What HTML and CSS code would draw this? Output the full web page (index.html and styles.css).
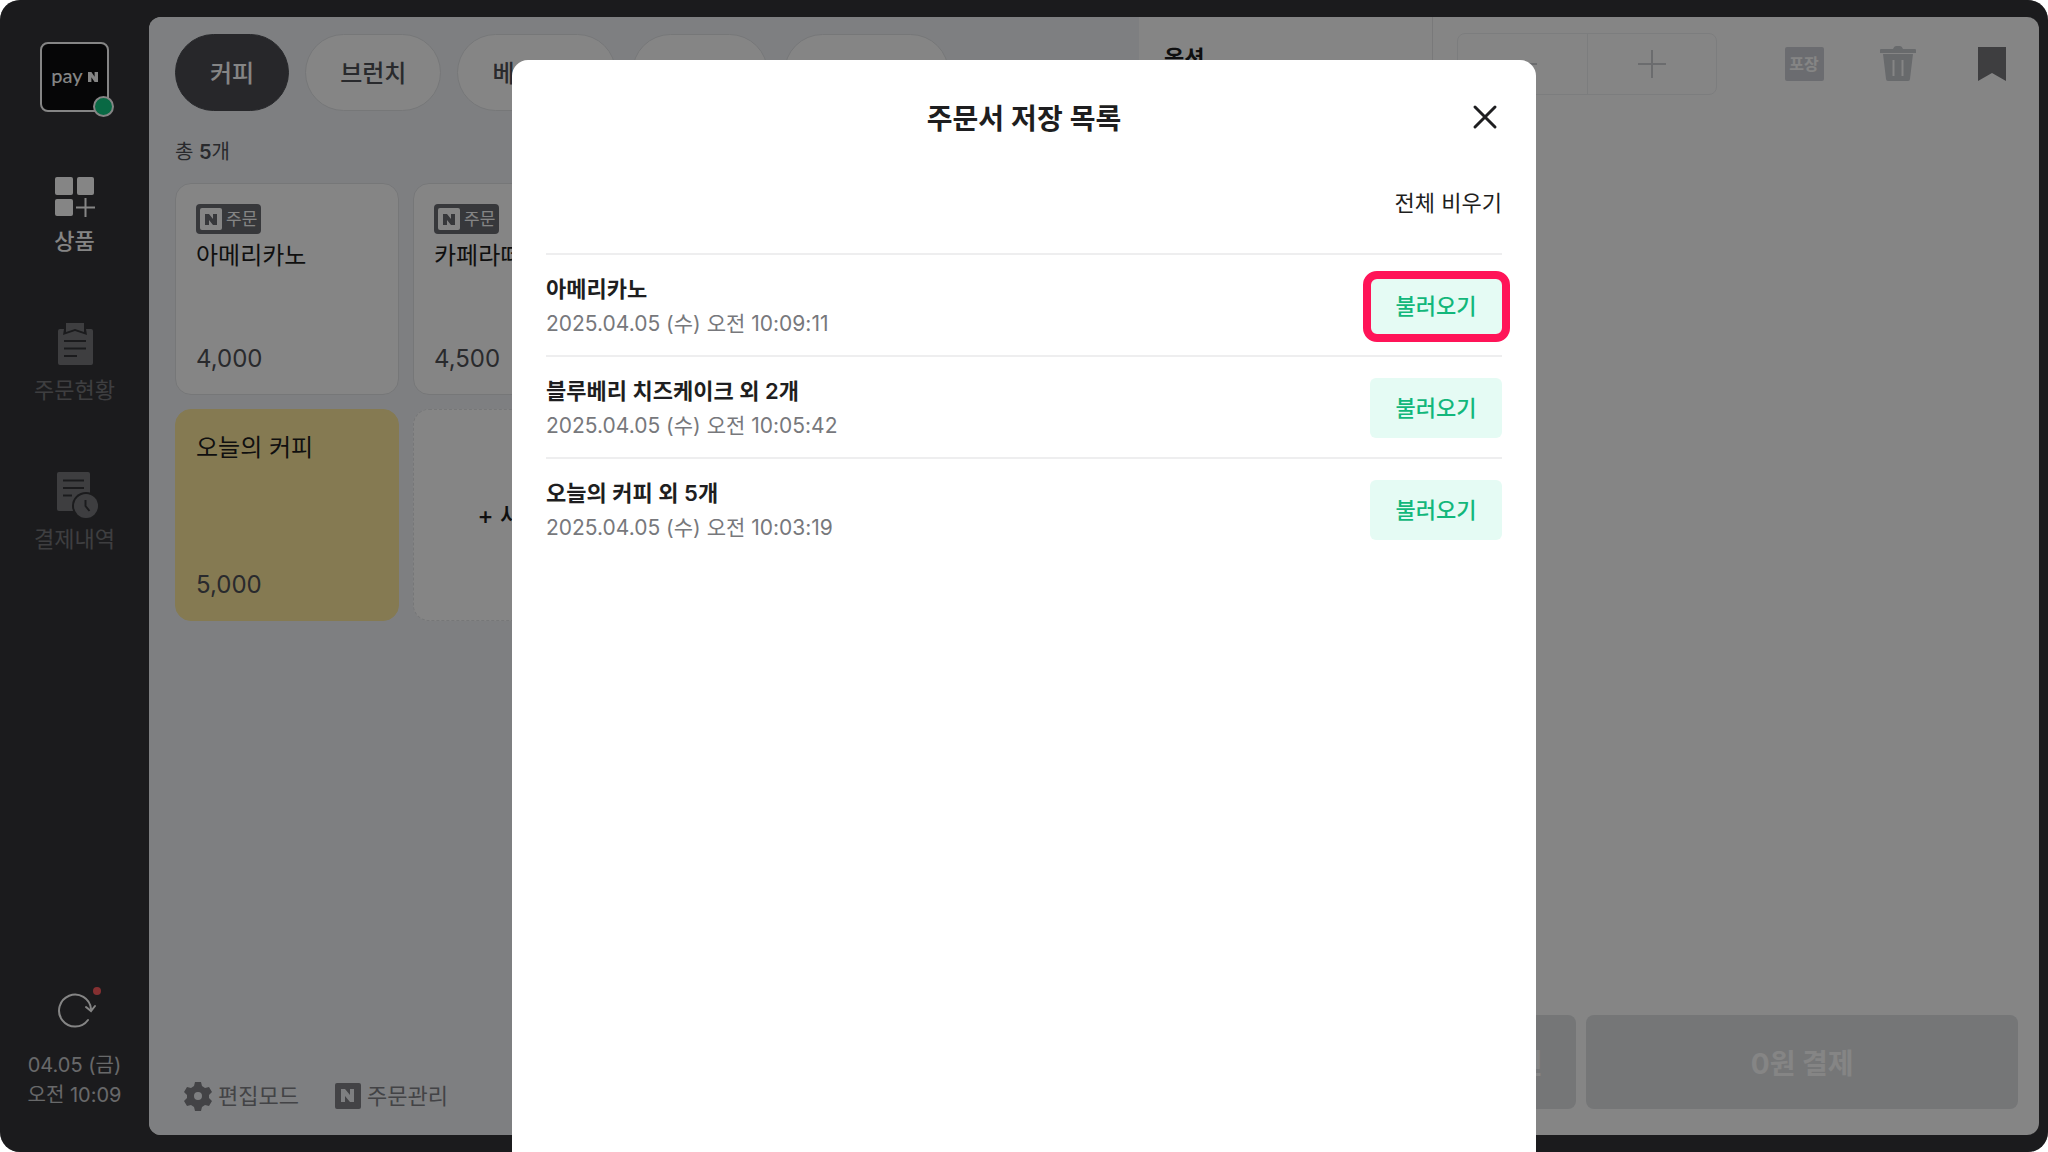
FILE: index.html
```html
<!DOCTYPE html>
<html lang="ko">

<head>
    <meta charset="UTF-8">
    <meta name="viewport" content="width=device-width, initial-scale=1.0">
    <title>주문서 저장 목록</title>
    <link rel="stylesheet" href="styles.css">
</head>

<body>
    <div class="app">
        <!-- Left menu -->
        <nav class="sidebar">
            <a href="#" class="logo">
                <span class="logo-pay">pay</span><svg class="logo-n" viewBox="0 0 10 10"><path d="M0 0h3.4l3.2 4.7V0H10v10H6.6L3.4 5.3V10H0z" fill="currentColor"/></svg>
                <span class="logo-dot"></span>
            </a>

            <div class="menu">
                <a href="#" class="menu-item active">
                    <svg width="44" height="44" viewBox="0 0 44 44">
                        <g fill="currentColor">
                            <rect x="2" y="2" width="18" height="18" rx="2"/>
                            <rect x="24" y="2" width="17" height="18" rx="2"/>
                            <rect x="2" y="24" width="18" height="17" rx="2"/>
                        </g>
                        <path d="M32.5 23v19M23 32.5h19" stroke="currentColor" stroke-width="2"/>
                    </svg>
                    상품
                </a>
                <a href="#" class="menu-item">
                    <svg width="44" height="44" viewBox="0 2 44 44">
                        <path d="M6 7h5l-1 6 12-4 12 4-1-6h5q2 0 2 2v32q0 2-2 2H7q-2 0-2-2V9q0-2 2-2z" fill="currentColor"/>
                        <path d="M13 1h18v9l-9-3-9 3z" fill="currentColor"/>
                        <path d="M11 19h22M11 26.5h22M11 34h13" class="cut"/>
                    </svg>
                    주문현황
                </a>
                <a href="#" class="menu-item">
                    <svg width="44" height="44" viewBox="0 3 44 44">
                        <rect x="4" y="2" width="33" height="39" rx="2" fill="currentColor"/>
                        <path d="M10 10.5h21M10 18h21M10 25.5h9" class="cut"/>
                        <circle cx="33" cy="36" r="14" class="cut-fill"/>
                        <circle cx="33" cy="36" r="12" fill="currentColor"/>
                        <path d="M32.5 30v6l4 5" class="cut"/>
                    </svg>
                    결제내역
                </a>
            </div>

            <div class="status">
                <button class="refresh" aria-label="새로고침">
                    <svg width="44" height="44" viewBox="0 0 44 44">
                        <path d="M35 32a16 16 0 1 1 3-11" class="line"/>
                        <path d="M33 19l5 4 4-5" class="line"/>
                        <circle cx="44" cy="3" r="4" class="alert"/>
                    </svg>
                </button>
                <p>04.05 (금)<br>오전 10:09</p>
            </div>
        </nav>

        <main class="panel">
            <!-- Product list -->
            <section class="products">
                <div class="tabs">
                    <button class="tab selected">커피</button>
                    <button class="tab">브런치</button>
                    <button class="tab">베이커리</button>
                    <button class="tab">디저트</button>
                    <button class="tab">시즌 메뉴</button>
                </div>
                <p class="count">총 <b>5</b>개</p>
                <div class="grid">
                    <button class="card">
                        <span class="badge"><svg width="22" height="22" viewBox="0 0 22 22"><rect width="22" height="22" rx="2" fill="#fff"/><path d="M5 6h4l4 5V6h4v11h-4l-4-5v5H5z" fill="#6a6b72"/></svg>주문</span>
                        <span class="name">아메리카노</span>
                        <span class="price">4,000</span>
                    </button>
                    <button class="card">
                        <span class="badge"><svg width="22" height="22" viewBox="0 0 22 22"><rect width="22" height="22" rx="2" fill="#fff"/><path d="M5 6h4l4 5V6h4v11h-4l-4-5v5H5z" fill="#6a6b72"/></svg>주문</span>
                        <span class="name">카페라떼</span>
                        <span class="price">4,500</span>
                    </button>
                    <button class="card">
                        <span class="name">카푸치노</span>
                        <span class="price">4,500</span>
                    </button>
                    <button class="card">
                        <span class="name">바닐라라떼</span>
                        <span class="price">5,000</span>
                    </button>
                    <button class="card yellow">
                        <span class="name">오늘의 커피</span>
                        <span class="price">5,000</span>
                    </button>
                    <button class="card add">+ 새 상품</button>
                </div>
                <div class="tools">
                    <button class="tool">
                        <svg width="28" height="30" viewBox="0 0 28 30">
                            <path fill-rule="evenodd" fill="currentColor" d="M11 1h6l1 4 3 2 4-1 3 5-3 3v3l3 3-3 5-4-1-3 2-1 4h-6l-1-4-3-2-4 1-3-5 3-3v-3l-3-3 3-5 4 1 3-2zM14 11a4 4 0 1 0 0 8 4 4 0 0 0 0-8z"/>
                        </svg>
                        편집모드
                    </button>
                    <button class="tool">
                        <svg width="26" height="26" viewBox="0 0 26 26">
                            <path fill-rule="evenodd" fill="currentColor" d="M2 0h22q2 0 2 2v22q0 2-2 2H2q-2 0-2-2V2q0-2 2-2zM6 6v13h4v-6l5 6h4V6h-4v6l-5-6z"/>
                        </svg>
                        주문관리
                    </button>
                </div>
            </section>

            <section class="options">
                <h2>옵션</h2>
            </section>

            <!-- Order sheet -->
            <section class="order">
                <div class="order-head">
                    <div class="stepper">
                        <button aria-label="빼기"><svg width="28" height="28" viewBox="0 0 28 28"><path d="M0 14h28"/></svg></button>
                        <button aria-label="더하기"><svg width="28" height="28" viewBox="0 0 28 28"><path d="M0 14h28M14 0v28"/></svg></button>
                    </div>
                    <div class="actions">
                        <button class="action"><span class="pack">포장</span></button>
                        <button class="action trash" aria-label="삭제">
                            <svg width="38" height="38" viewBox="0 0 38 38">
                                <path d="M1 5q0-1 1-1h12q1-3 3-3h4q2 0 3 3h12q1 0 1 1v3H1z" fill="currentColor"/>
                                <path d="M4 9h30l-3 25q0 2-2 2H9q-2 0-2-2z" fill="currentColor"/>
                                <path d="M14.5 15v16M23.5 15v16" stroke="#fff" stroke-width="2"/>
                            </svg>
                        </button>
                        <button class="action saved" aria-label="저장 목록">
                            <svg width="28" height="34" viewBox="0 0 28 34"><path d="M0 0h28v34l-14-8-14 8z" fill="currentColor"/></svg>
                        </button>
                    </div>
                </div>
                <div class="pay">
                    <button class="pay-btn">할인</button>
                    <button class="pay-btn">0원 결제</button>
                </div>
            </section>
        </main>
    </div>

    <!-- Saved orders -->
    <div class="overlay">
        <div class="modal" role="dialog" aria-labelledby="modalTitle">
            <header class="modal-head">
                <h1 id="modalTitle">주문서 저장 목록</h1>
                <button class="close" aria-label="닫기">
                    <svg width="24" height="24" viewBox="0 0 24 24"><path d="M2 2l20 20M22 2L2 22"/></svg>
                </button>
            </header>
            <button class="clear">전체 비우기</button>
            <ul class="list">
                <li>
                    <div>
                        <h3>아메리카노</h3>
                        <p>2025.04.05 (수) 오전 10:09:11</p>
                    </div>
                    <button class="load highlight">불러오기</button>
                </li>
                <li>
                    <div>
                        <h3>블루베리 치즈케이크 외 2개</h3>
                        <p>2025.04.05 (수) 오전 10:05:42</p>
                    </div>
                    <button class="load">불러오기</button>
                </li>
                <li>
                    <div>
                        <h3>오늘의 커피 외 5개</h3>
                        <p>2025.04.05 (수) 오전 10:03:19</p>
                    </div>
                    <button class="load">불러오기</button>
                </li>
            </ul>
        </div>
    </div>
</body>

</html>
```

FILE: styles.css
```css
* {
    box-sizing: border-box;
}

body {
    font-family: Inter, "Noto Sans CJK KR", sans-serif;
    margin: 0;
    background-color: #fff;
    color: #1e1e20;
    overflow: hidden;
}

h1,
h2,
h3,
p,
ul {
    margin: 0;
    padding: 0;
}

a {
    color: inherit;
    text-decoration: none;
}

button {
    font: inherit;
    color: inherit;
    background: none;
    border: none;
    padding: 0;
    cursor: pointer;
}

svg {
    display: block;
    overflow: visible;
}

.app {
    display: flex;
    height: 100vh;
    padding: 17px 9px 17px 0;
    background-color: #353538;
    border-radius: 20px;
}

/* Left menu */
.sidebar {
    display: flex;
    flex-direction: column;
    align-items: center;
    width: 149px;
    padding: 25px 0;
    color: #fff;
}

.logo {
    position: relative;
    display: flex;
    align-items: center;
    justify-content: center;
    gap: 5px;
    width: 69px;
    height: 70px;
    background-color: #0c0c0e;
    border: 2px solid #fff;
    border-radius: 8px;
}

.logo-pay {
    padding-bottom: 4px;
    font-family: Lato, sans-serif;
    font-size: 20px;
    font-weight: 500;
    line-height: 24px;
}

.logo-n {
    width: 10px;
    height: 10px;
}

.logo-dot {
    position: absolute;
    right: -7px;
    bottom: -7px;
    width: 21px;
    height: 21px;
    background-color: #12c982;
    border: 2px solid #fff;
    border-radius: 50%;
}

.menu {
    display: flex;
    flex-direction: column;
    gap: 52px;
    margin-top: 63px;
}

.menu-item {
    display: flex;
    flex-direction: column;
    align-items: center;
    gap: 6px;
    height: 97px;
    font-size: 22px;
    line-height: 32px;
    color: #77787c;
}

.menu-item.active {
    color: #fff;
    font-weight: 500;
}

.cut {
    fill: none;
    stroke: #353538;
    stroke-width: 2;
}

.cut-fill {
    fill: #353538;
}

.status {
    display: flex;
    flex-direction: column;
    align-items: center;
    gap: 18px;
    margin-top: auto;
    font-size: 20px;
    line-height: 30px;
    color: #c8c9cc;
    text-align: center;
}

.line {
    fill: none;
    stroke: #fff;
    stroke-width: 2;
    stroke-linecap: round;
}

.alert {
    fill: #ff5c5f;
}

/* Main panel */
.panel {
    display: flex;
    flex: 1;
    background-color: #fff;
    border-radius: 12px;
    overflow: hidden;
}

.products {
    display: flex;
    flex-direction: column;
    flex: 1;
    padding: 17px 26px 21px;
    background-color: #f2f4f7;
}

.tabs {
    display: flex;
    gap: 16px;
}

.tab {
    height: 77px;
    padding: 0 34px 2px;
    font-size: 24px;
    font-weight: 500;
    color: #505156;
    background-color: #fff;
    border: 1px solid #e2e4e7;
    border-radius: 39px;
    white-space: nowrap;
}

.tab.selected {
    color: #fff;
    background-color: #4b4c52;
    border-color: #4b4c52;
}

.count {
    margin: 25px 0 15px;
    font-size: 20px;
    line-height: 32px;
    color: #505156;
}

.count b {
    font-weight: 600;
}

.grid {
    display: grid;
    grid-template-columns: repeat(4, 224px);
    grid-auto-rows: 212px;
    gap: 14px;
}

.card {
    display: flex;
    flex-direction: column;
    align-items: flex-start;
    padding: 20px 20px 19px;
    font-size: 24px;
    background-color: #fff;
    border: 1px solid #e2e4e7;
    border-radius: 16px;
}

.badge {
    display: flex;
    align-items: center;
    gap: 4px;
    height: 30px;
    padding: 0 4px;
    font-size: 17px;
    line-height: 22px;
    color: #fff;
    background-color: #6a6b72;
    border-radius: 4px;
}

.name {
    line-height: 36px;
}

.badge + .name {
    margin-top: 4px;
}

.price {
    margin-top: auto;
    line-height: 32px;
    color: #505156;
}

.yellow {
    background-color: #ffea9e;
    border-color: #ffea9e;
}

.add {
    align-items: center;
    justify-content: center;
    padding-bottom: 24px;
    font-weight: 500;
    border-style: dashed;
}

.tools {
    display: flex;
    gap: 36px;
    margin-top: auto;
    padding-left: 9px;
}

.tool {
    display: flex;
    align-items: center;
    gap: 6px;
    font-size: 22px;
    line-height: 36px;
    color: #808186;
}

.options {
    width: 295px;
    padding: 23px 25px;
    border-right: 1px solid #e8e8ea;
}

.options h2 {
    font-size: 22px;
    font-weight: 600;
    line-height: 36px;
}

/* Order sheet */
.order {
    display: flex;
    flex-direction: column;
    justify-content: space-between;
    width: 607px;
    padding: 16px 21px 26px 24px;
}

.order-head {
    display: flex;
    justify-content: space-between;
    padding-right: 4px;
}

.stepper {
    display: flex;
    width: 260px;
    height: 62px;
    border: 1px solid #eeeff1;
    border-radius: 8px;
}

.stepper button {
    display: flex;
    flex: 1;
    align-items: center;
    justify-content: center;
}

.stepper button + button {
    border-left: 1px solid #eeeff1;
}

.stepper path {
    stroke: #ced0d4;
    stroke-width: 2;
}

.actions {
    display: flex;
    align-items: center;
    gap: 50px;
}

.action {
    display: flex;
    align-items: center;
    justify-content: center;
    width: 44px;
    height: 44px;
}

.pack {
    width: 39px;
    font-size: 16px;
    font-weight: 700;
    line-height: 34px;
    color: #fff;
    background-color: #ced0d6;
    border-radius: 2px;
}

.trash {
    color: #c8cbd0;
}

.saved {
    color: #77787c;
}

.pay {
    display: grid;
    grid-template-columns: 119px 1fr;
    gap: 10px;
}

.pay-btn {
    height: 94px;
    font-size: 28px;
    font-weight: 700;
    color: #fff;
    background-color: #e0e2e4;
    border-radius: 8px;
}

/* Saved orders */
.overlay {
    position: fixed;
    inset: 0;
    display: flex;
    justify-content: center;
    padding-top: 60px;
    background-color: rgba(0, 0, 0, 0.48);
    border-radius: 20px;
}

.modal {
    width: 50%;
    padding: 34px;
    background-color: #fff;
    border-radius: 16px 16px 0 0;
}

.modal-head {
    display: grid;
    grid-template-columns: 1fr auto 1fr;
    align-items: center;
    height: 46px;
}

.modal-head h1 {
    grid-column: 2;
    font-size: 28px;
    font-weight: 600;
}

.close {
    justify-self: end;
    padding-right: 5px;
}

.close path {
    stroke: #1e1e20;
    stroke-width: 3;
    stroke-linecap: round;
}

.clear {
    display: block;
    margin: 47px 0 33px auto;
    font-size: 22px;
    line-height: 33px;
}

.list {
    list-style: none;
}

.list li {
    display: flex;
    align-items: center;
    justify-content: space-between;
    height: 102px;
    padding-top: 1px;
    border-top: 2px solid #eeeeef;
}

.list h3 {
    font-size: 22px;
    font-weight: 600;
    line-height: 36px;
}

.list p {
    font-size: 21px;
    line-height: 34px;
    color: #77787c;
}

.load {
    position: relative;
    width: 132px;
    height: 60px;
    padding-bottom: 4px;
    font-size: 22px;
    font-weight: 500;
    color: #12b77b;
    background-color: #e5fbf4;
    border-radius: 6px;
}

/* Ring round the button to press */
.highlight::after {
    content: "";
    position: absolute;
    inset: -5px -8px -6px -7px;
    border: 8px solid #ff1458;
    border-radius: 14px;
}
```
